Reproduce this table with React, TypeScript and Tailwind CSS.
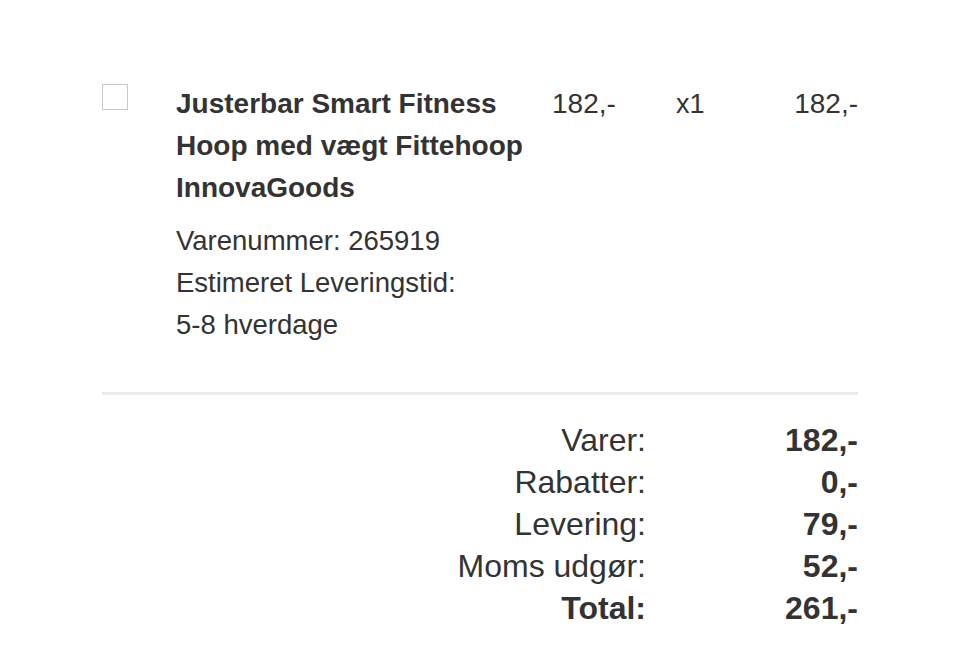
import React from "react";

export default function App() {
  return (
    <div className="w-[960px] h-[667px] bg-white text-[#333] overflow-hidden" style={{ fontFamily: '"Liberation Sans", Arial, sans-serif' }}>
      <div className="ml-[102px] w-[756px] pt-[83px]">
        <div className="flex items-start">
          <div className="w-[26px] h-[26px] mt-[1px] border border-[#c8c8c8] bg-white shrink-0" />
          <div className="ml-[48px] w-[376px] shrink-0">
            <div className="text-[28px] leading-[42px] font-bold pr-[12px]">
              Justerbar Smart Fitness Hoop med vægt Fittehoop InnovaGoods
            </div>
            <div className="mt-[11px] text-[27.5px] leading-[42px]">
              <div>Varenummer: 265919</div>
              <div>Estimeret Leveringstid:</div>
              <div>5-8 hverdage</div>
            </div>
          </div>
          <div className="w-[124px] shrink-0 text-[28px] leading-[42px]">182,-</div>
          <div className="w-[60px] shrink-0 text-[27px] leading-[42px]">x1</div>
          <div className="flex-1 text-right text-[28px] leading-[42px]">182,-</div>
        </div>
        <div className="mt-[46px] h-[3px] bg-[#ebebeb]" />
        <div className="mt-[24px] grid grid-cols-[544px_212px] text-[32px] leading-[42px]">
          <div className="text-right">Varer:</div>
          <div className="text-right font-bold">182,-</div>
          <div className="text-right">Rabatter:</div>
          <div className="text-right font-bold">0,-</div>
          <div className="text-right">Levering:</div>
          <div className="text-right font-bold">79,-</div>
          <div className="text-right">Moms udgør:</div>
          <div className="text-right font-bold">52,-</div>
          <div className="text-right font-bold">Total:</div>
          <div className="text-right font-bold">261,-</div>
        </div>
      </div>
    </div>
  );
}
